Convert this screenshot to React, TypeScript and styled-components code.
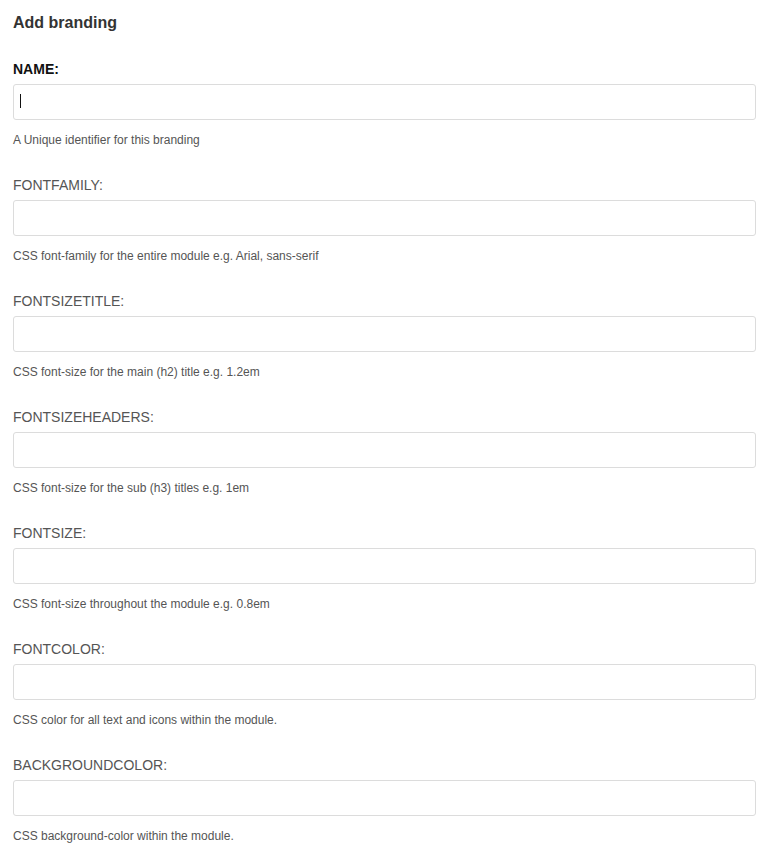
import React from "react";
import styled, { createGlobalStyle } from "styled-components";

const GlobalStyle = createGlobalStyle`
  html, body {
    margin: 0;
    padding: 0;
    background: #ffffff;
    overflow: hidden;
  }
  body {
    font-family: "Liberation Sans", Arial, sans-serif;
  }
`;

const Page = styled.div`
  padding: 14px 15px 0 13px;
  display: flex;
  flex-direction: column;
`;

const Title = styled.h2`
  margin: 0 0 27px 0;
  font-size: 16px;
  line-height: 18px;
  font-weight: bold;
  color: #333333;
`;

const Field = styled.div`
  display: flex;
  flex-direction: column;
  margin-bottom: 26px;
`;

const Label = styled.label<{ $strong?: boolean }>`
  font-size: 14px;
  line-height: 20px;
  margin-bottom: 5px;
  font-weight: ${(p) => (p.$strong ? "bold" : "normal")};
  color: ${(p) => (p.$strong ? "#111111" : "#555555")};
`;

const InputWrap = styled.div`
  position: relative;
  display: flex;
`;

const Input = styled.input`
  box-sizing: border-box;
  width: 100%;
  height: 36px;
  margin: 0;
  padding: 6px 6px;
  border: 1px solid #dcdcdc;
  border-radius: 3px;
  font-family: "Liberation Sans", Arial, sans-serif;
  font-size: 14px;
  color: #333;
  background: #fff;
  outline: none;
  caret-color: transparent;
`;

const Caret = styled.span`
  position: absolute;
  left: 7px;
  top: 10px;
  width: 1px;
  height: 14px;
  background: #111111;
  pointer-events: none;
`;

const Help = styled.div`
  margin-top: 12px;
  font-size: 12px;
  line-height: 17px;
  color: #555555;
`;

const fields = [
  { name: "NAME:", help: "A Unique identifier for this branding", strong: true },
  { name: "FONTFAMILY:", help: "CSS font-family for the entire module e.g. Arial, sans-serif" },
  { name: "FONTSIZETITLE:", help: "CSS font-size for the main (h2) title e.g. 1.2em" },
  { name: "FONTSIZEHEADERS:", help: "CSS font-size for the sub (h3) titles e.g. 1em" },
  { name: "FONTSIZE:", help: "CSS font-size throughout the module e.g. 0.8em" },
  { name: "FONTCOLOR:", help: "CSS color for all text and icons within the module." },
  { name: "BACKGROUNDCOLOR:", help: "CSS background-color within the module." },
];

export default function App() {
  return (
    <>
      <GlobalStyle />
      <Page>
        <Title>Add branding</Title>
        {fields.map((f, i) => (
          <Field key={f.name}>
            <Label $strong={f.strong} htmlFor={`f${i}`}>
              {f.name}
            </Label>
            <InputWrap>
              <Input id={`f${i}`} type="text" />
              {i === 0 && <Caret />}
            </InputWrap>
            <Help>{f.help}</Help>
          </Field>
        ))}
      </Page>
    </>
  );
}
